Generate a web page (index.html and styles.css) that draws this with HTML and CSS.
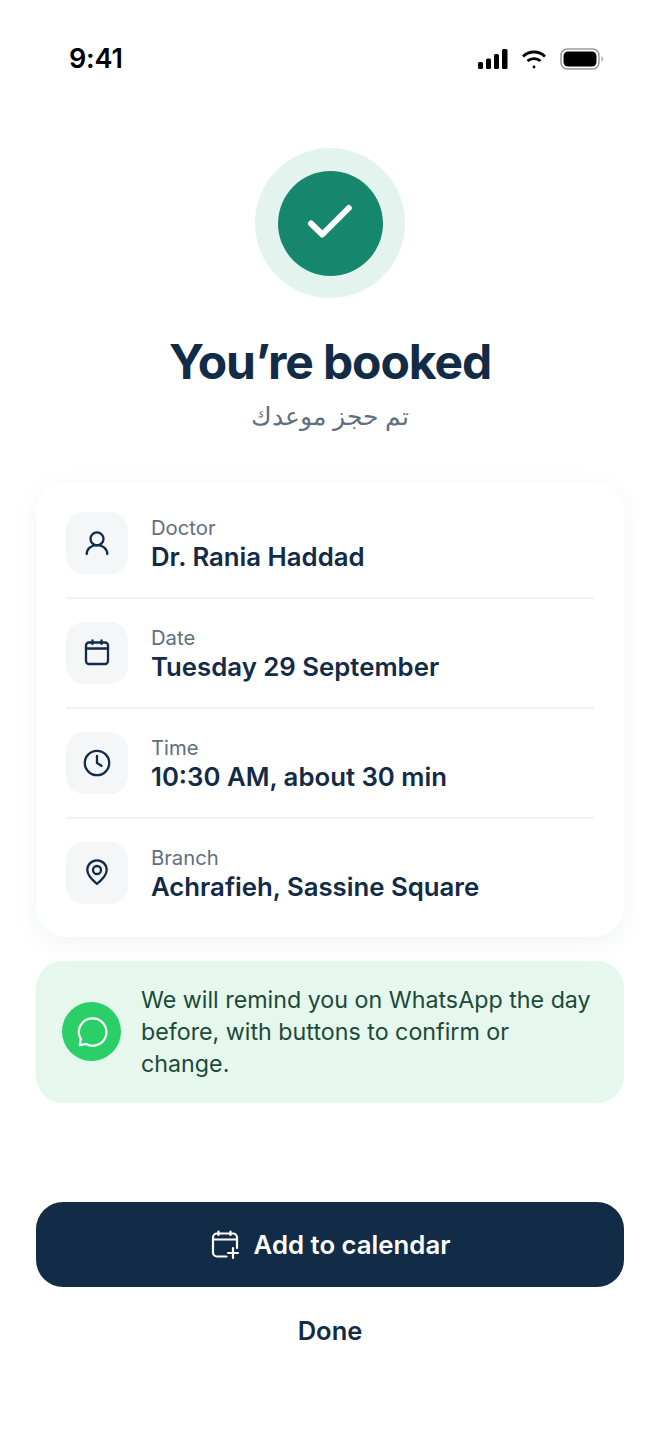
FILE: index.html
```html
<!DOCTYPE html>
<html lang="en">
<head>
<meta charset="utf-8">
<title>Booked</title>
<link rel="stylesheet" href="styles.css">
</head>
<body>
<div class="screen">
  <header class="status">
    <span class="clock">9:41</span>
    <div class="status-icons">
      <svg width="30" height="20" viewBox="0 0 30 20"><rect x="0" y="13" width="5" height="7" rx="1.5"/><rect x="8" y="9.500" width="5" height="10.500" rx="1.500"/><rect x="16" y="5" width="5" height="15" rx="1.500"/><rect x="24" y="0" width="5.500" height="20" rx="1.500"/></svg>
      <svg width="26" height="20" viewBox="0 0 26 20" fill="none" stroke="#000" stroke-width="2.800"><path d="M2 7.500C8 1.500 18 1.500 24 7.500"/><path d="M6.500 12C10 8.800 16 8.800 19.500 12"/><circle cx="13" cy="18" r="1.400" fill="#000" stroke="none"/></svg>
      <svg width="44" height="22" viewBox="0 0 44 22"><rect x="1" y="1" width="38" height="20" rx="6.500" fill="none" stroke="#999" stroke-width="1.500"/><rect x="3.500" y="3.500" width="33" height="15" rx="4.500" fill="#000"/><path d="M41.500 8v6c1-.4 1.500-1.600 1.500-3s-.5-2.600-1.500-3z" fill="#aaa"/></svg>
    </div>
  </header>

  <section class="hero">
    <div class="ring"><div class="disc">
      <svg width="48" height="48" viewBox="0 0 48 48" fill="none" stroke="#fff" stroke-width="6" stroke-linecap="round" stroke-linejoin="round"><path d="M5 24.500 L16.300 35.500 L42.800 9"/></svg>
    </div></div>
    <h1 class="title">You’re booked</h1>
    <p class="arabic" dir="rtl" lang="ar">تم حجز موعدك</p>
  </section>

  <section class="card">
    <div class="row">
      <div class="tile"><svg class="ico" viewBox="0 0 30 30"><circle cx="15" cy="10.800" r="6.500"/><path d="M4.700 26c0-5.300 4.500-8.800 10.300-8.800s10.300 3.500 10.300 8.800"/></svg></div>
      <div class="info"><div class="label">Doctor</div><div class="value">Dr. Rania Haddad</div></div>
    </div>
    <div class="row">
      <div class="tile"><svg class="ico" viewBox="0 0 30 30"><rect x="4" y="4.500" width="22" height="21.500" rx="3"/><path d="M4 10.500h22M10.500 2.500v3.500M19.500 2.500v3.500"/></svg></div>
      <div class="info"><div class="label">Date</div><div class="value">Tuesday 29 September</div></div>
    </div>
    <div class="row">
      <div class="tile"><svg class="ico" viewBox="0 0 30 30"><circle cx="15" cy="15" r="12.200"/><path d="M15 8v7l4.500 2.800"/></svg></div>
      <div class="info"><div class="label">Time</div><div class="value">10:30 AM, about 30 min</div></div>
    </div>
    <div class="row">
      <div class="tile"><svg class="ico" viewBox="0 0 30 30"><path d="M15 25.800C9 21 5.300 16.500 5.300 12a9.700 9.700 0 0 1 19.400 0c0 4.500-3.700 9-9.700 13.800z"/><circle cx="15" cy="12" r="4"/></svg></div>
      <div class="info"><div class="label">Branch</div><div class="value">Achrafieh, Sassine Square</div></div>
    </div>
  </section>

  <section class="notice">
    <div class="wa"><svg width="32" height="32" viewBox="0 0 32 32" fill="none" stroke="#fff" stroke-width="2.200" stroke-linejoin="round" stroke-linecap="round"><path d="M16.700 3.300a13.700 13.700 0 1 1-6.600 25.700L3.800 30.200l1-6.200A13.700 13.700 0 0 1 16.700 3.300z"/></svg></div>
    <p class="notice-text">We will remind you on WhatsApp the day before, with buttons to confirm or change.</p>
  </section>

  <div class="actions">
    <button class="primary">
      <svg width="30" height="30" viewBox="-1 0 30 30" fill="none" stroke="#fff" stroke-width="2.200" stroke-linecap="round" stroke-linejoin="round"><path d="M15.500 26.500H6a4 4 0 0 1-4-4V7.500a4 4 0 0 1 4-4H22a4 4 0 0 1 4 4V18"/><path d="M2 9.500H26M7.500 1.500V5M19.500 1.500V5M22 18v10M17 23h10"/></svg>
      <span>Add to calendar</span>
    </button>
    <button class="secondary">Done</button>
  </div>
</div>
</body>
</html>
```

FILE: styles.css
```css
* { box-sizing: border-box; }
html, body { margin: 0; padding: 0; background: #fff; }
body { font-family: Inter, "Noto Sans", sans-serif; color: #122b46; }
.screen { width: 660px; height: 1435px; display: flex; flex-direction: column; padding: 0 36px; }

.status { height: 118px; flex: none; display: flex; justify-content: space-between; align-items: flex-start; padding: 42px 20px 0 33px; }
.clock { font-size: 27px; line-height: 34px; font-weight: 600; letter-spacing: -0.2px; color: #000; }
.status-icons { display: flex; align-items: center; gap: 13px; height: 34px; }
.status-icons svg { display: block; }

.hero { display: flex; flex-direction: column; align-items: center; margin-top: 30px; }
.ring { width: 150px; height: 150px; border-radius: 50%; background: #e3f3ee; display: flex; align-items: center; justify-content: center; }
.disc { width: 105px; height: 105px; border-radius: 50%; background: #16866c; display: flex; align-items: center; justify-content: center; }
.title { margin: 34px 0 0; font-size: 48px; line-height: 60px; font-weight: 700; letter-spacing: -1.1px; color: #122b46; }
.arabic { margin: 5px 0 0; font-size: 24.750px; line-height: 38px; color: #5f6f80; font-family: Inter, "Noto Sans", sans-serif; }

.card { margin-top: 47px; height: 455px; padding: 7px 30px 0; background: #fff; border-radius: 30px; box-shadow: 0 6px 24px rgba(18, 43, 70, 0.06); flex: none; }
.row { height: 110px; display: flex; align-items: center; gap: 23px; border-bottom: 2px solid #f0f2f4; }
.row:last-child { border-bottom-color: transparent; }
.tile { width: 62px; height: 62px; border-radius: 18px; background: #f4f6f8; display: flex; align-items: center; justify-content: center; flex: none; }
.ico { width: 30px; height: 30px; fill: none; stroke: #122b46; stroke-width: 2.300; stroke-linecap: round; stroke-linejoin: round; }
.label { font-size: 20.250px; line-height: 27px; color: #5f6f80; }
.value { font-size: 25.750px; line-height: 31px; font-weight: 600; color: #122b46; }

.notice { margin-top: 24px; height: 142px; flex: none; border-radius: 27px; background: #e6f7ee; display: flex; align-items: center; gap: 20px; padding: 0 26px 2px; }
.wa { width: 59px; height: 59px; border-radius: 50%; background: #2acf68; display: flex; align-items: center; justify-content: center; flex: none; }
.notice-text { margin: 2px 0 0; font-size: 23.250px; line-height: 32px; color: #1c4a39; }

.actions { margin-top: auto; padding-bottom: 62px; display: flex; flex-direction: column; align-items: stretch; }
.primary { height: 85px; border: 0; border-radius: 27px; background: #122b46; color: #fff; font: 600 25.750px Inter, sans-serif; display: flex; align-items: center; justify-content: center; gap: 14px; padding: 0; }
.secondary { height: 86px; border: 0; background: none; color: #122b46; font: 600 25.500px Inter, sans-serif; padding: 0; }
```
